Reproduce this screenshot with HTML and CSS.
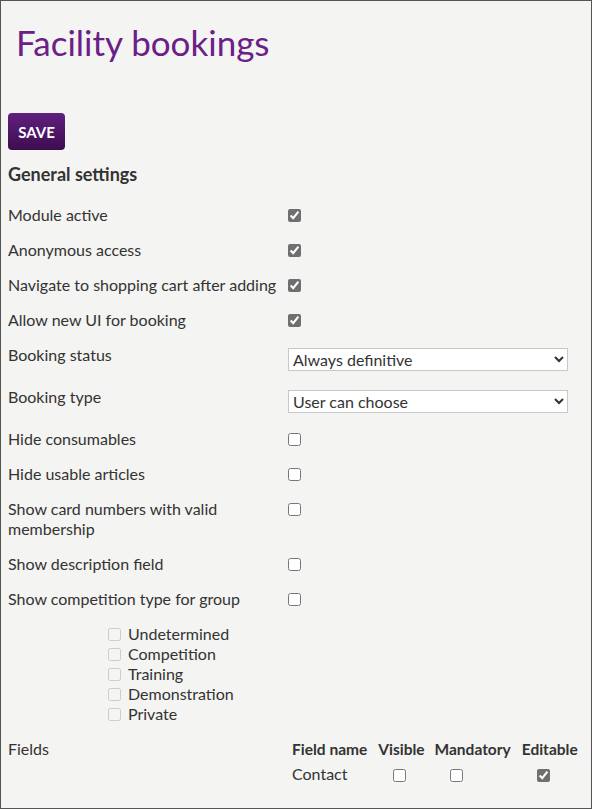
FILE: index.html
```html
<!DOCTYPE html>
<html lang="en">
<head>
  <meta charset="UTF-8">
  <title>Facility bookings</title>
  <link rel="stylesheet" href="styles.css">
</head>
<body>
  <div class="page">
    <h1 class="title">Facility bookings</h1>
    <button class="save">SAVE</button>
    <h2 class="section-title">General settings</h2>

    <div class="row">
      <label class="label">Module active</label>
      <div class="control"><input type="checkbox" class="check" checked></div>
    </div>
    <div class="row">
      <label class="label">Anonymous access</label>
      <div class="control"><input type="checkbox" class="check" checked></div>
    </div>
    <div class="row">
      <label class="label">Navigate to shopping cart after adding</label>
      <div class="control"><input type="checkbox" class="check" checked></div>
    </div>
    <div class="row">
      <label class="label">Allow new UI for booking</label>
      <div class="control"><input type="checkbox" class="check" checked></div>
    </div>
    <div class="row">
      <label class="label">Booking status</label>
      <div class="control">
        <select class="select">
          <option>Always definitive</option>
        </select>
      </div>
    </div>
    <div class="row">
      <label class="label">Booking type</label>
      <div class="control">
        <select class="select">
          <option>User can choose</option>
        </select>
      </div>
    </div>
    <div class="row">
      <label class="label">Hide consumables</label>
      <div class="control"><input type="checkbox" class="check"></div>
    </div>
    <div class="row">
      <label class="label">Hide usable articles</label>
      <div class="control"><input type="checkbox" class="check"></div>
    </div>
    <div class="row">
      <label class="label">Show card numbers with valid membership</label>
      <div class="control"><input type="checkbox" class="check"></div>
    </div>
    <div class="row">
      <label class="label">Show description field</label>
      <div class="control"><input type="checkbox" class="check"></div>
    </div>
    <div class="row">
      <label class="label">Show competition type for group</label>
      <div class="control"><input type="checkbox" class="check"></div>
    </div>

    <ul class="types">
      <li><input type="checkbox" class="check" disabled> Undetermined</li>
      <li><input type="checkbox" class="check" disabled> Competition</li>
      <li><input type="checkbox" class="check" disabled> Training</li>
      <li><input type="checkbox" class="check" disabled> Demonstration</li>
      <li><input type="checkbox" class="check" disabled> Private</li>
    </ul>

    <div class="row fields-row">
      <label class="label">Fields</label>
      <table class="fields">
        <tr>
          <th>Field name</th>
          <th>Visible</th>
          <th>Mandatory</th>
          <th>Editable</th>
        </tr>
        <tr>
          <td>Contact</td>
          <td><input type="checkbox" class="check"></td>
          <td><input type="checkbox" class="check"></td>
          <td><input type="checkbox" class="check" checked></td>
        </tr>
      </table>
    </div>
  </div>
</body>
</html>
```

FILE: styles.css
```css
html, body {
  margin: 0;
  padding: 0;
}
body {
  font-family: Lato, "Open Sans", sans-serif;
  font-size: 16px;
  color: #333;
  background: #fff;
}
.page {
  box-sizing: border-box;
  height: 809px;
  border: 1px solid #555;
  background: #f4f4f2;
  padding: 0 7px;
}
.title {
  font-size: 35px;
  font-weight: 400;
  color: #6b2088;
  margin: 21px 0 0 8px;
  line-height: 41px;
}
.save {
  display: block;
  margin-top: 50px;
  width: 57px;
  height: 37px;
  border: none;
  border-radius: 4px;
  background: linear-gradient(#612080, #3d0d50);
  color: #fff;
  font-family: Lato, sans-serif;
  font-weight: 700;
  font-size: 15px;
  padding: 0;
  cursor: pointer;
}
.section-title {
  font-size: 18px;
  font-weight: 700;
  margin: 13px 0 13px 0;
  line-height: 22px;
}
.row {
  display: grid;
  grid-template-columns: 280px 1fr;
  padding: 7px 0 8px;
  line-height: 20px;
}
.label {
  padding-right: 10px;
}
.control {
  display: flex;
  align-items: flex-start;
}
.check {
  margin: 0;
  width: 13px;
  height: 13px;
  accent-color: #6f6f6f;
}
.control .check {
  margin-top: 4px;
}
.select {
  margin: 3px 0 1px;
  width: 280px;
  height: 23px;
  border: 1px solid #c8c8c8;
  border-radius: 0;
  background: #fff;
  font-family: Lato, sans-serif;
  font-size: 16px;
  color: #333;
  padding: 0;
}
.types {
  list-style: none;
  margin: 0;
  padding: 7px 0 8px 100px;
  line-height: 20px;
}
.types li {
  display: flex;
  align-items: center;
  gap: 7px;
}
.fields-row {
  padding-top: 7px;
}
.fields {
  border-collapse: collapse;
  line-height: 20px;
}
.fields th {
  text-align: left;
  font-weight: 700;
  font-size: 15.5px;
  padding: 0 4px 5px;
  white-space: nowrap;
}
.fields td {
  padding: 0 4px;
}
.fields td .check {
  margin-left: 15px;
  vertical-align: middle;
}
```
